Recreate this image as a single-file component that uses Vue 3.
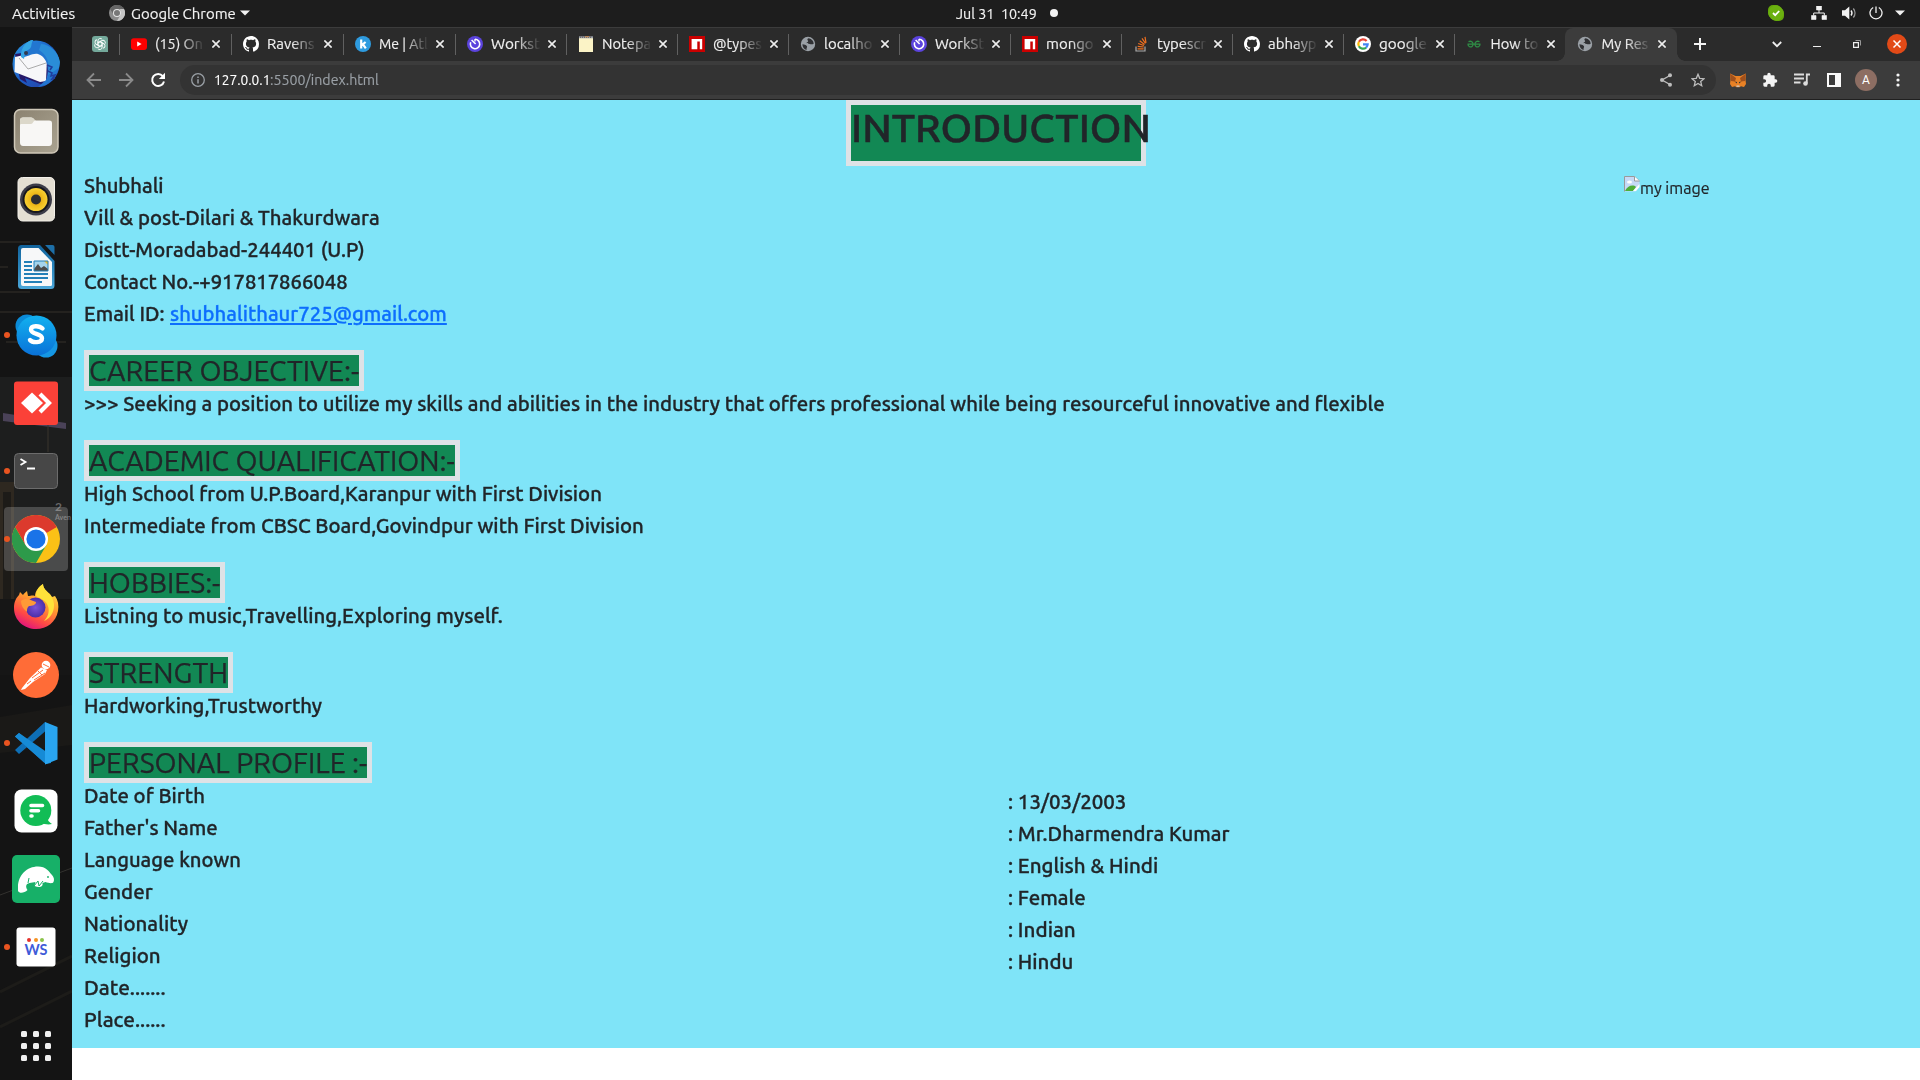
<script setup>
// Stretches or condenses a run of text to the given width in pixels.
const vFit = {
  mounted(el, { value }) {
    const natural = el.offsetWidth
    el.style.transform = `scaleX(${value / natural})`
    el.style.marginRight = `${value - natural}px`
  },
}

const clock = 'Jul 31\u00a0 10:49'

const tabs = [
  { icon: 'youtube', title: '(15) On', w: 48 },
  { icon: 'github', title: 'Ravens', w: 48 },
  { icon: 'keka', title: 'Me | Atl', w: 49 },
  { icon: 'clock', title: 'Workst', w: 49 },
  { icon: 'notepad', title: 'Notepa', w: 49 },
  { icon: 'npm', title: '@types', w: 49 },
  { icon: 'globe', title: 'localho', w: 49 },
  { icon: 'clock', title: 'WorkSt', w: 49 },
  { icon: 'npm', title: 'mongo', w: 48 },
  { icon: 'stack', title: 'typescr', w: 49 },
  { icon: 'github', title: 'abhayp', w: 49 },
  { icon: 'google', title: 'google', w: 48 },
  { icon: 'geeks', title: 'How to', w: 48 },
  { icon: 'globe', title: 'My Res', w: 47, active: true },
]

const dock = [
  { icon: 'thunderbird' },
  { icon: 'files' },
  { icon: 'rhythmbox' },
  { icon: 'writer' },
  { icon: 'skype', running: true },
  { icon: 'anydesk' },
  { icon: 'terminal', running: true },
  { icon: 'chrome', running: true, focused: true },
  { icon: 'firefox' },
  { icon: 'postman' },
  { icon: 'vscode', running: true },
  { icon: 'chat' },
  { icon: 'manatee' },
  { icon: 'workstatus', running: true, label: 'WS' },
]

const contact = [
  ['Shubhali', 80],
  ['Vill & post-Dilari & Thakurdwara', 296],
  ['Distt-Moradabad-244401 (U.P)', 281],
  ['Contact No.-+917817866048', 264],
]

const sections = [
  {
    heading: ['CAREER OBJECTIVE:-', 270],
    lines: [['>>> Seeking a position to utilize my skills and abilities in the industry that offers professional while being resourceful innovative and flexible', 1300.5]],
  },
  {
    heading: ['ACADEMIC QUALIFICATION:-', 366],
    lines: [
      ['High School from U.P.Board,Karanpur with First Division', 518],
      ['Intermediate from CBSC Board,Govindpur with First Division', 559.5],
    ],
  },
  { heading: ['HOBBIES:-', 131], lines: [['Listning to music,Travelling,Exploring myself.', 418.5]] },
  { heading: ['STRENGTH', 139], lines: [['Hardworking,Trustworthy', 238]] },
]

const labels = [
  ['Date of Birth', 121],
  ["Father's Name", 134],
  ['Language known', 157],
  ['Gender', 68.5],
  ['Nationality', 103.5],
  ['Religion', 77],
  ['Date.......', 82],
  ['Place......', 82],
]

const values = [
  [': 13/03/2003', 118],
  [': Mr.Dharmendra Kumar', 222],
  [': English & Hindi', 150],
  [': Female', 77.5],
  [': Indian', 68],
  [': Hindu', 65.5],
]
</script>

<template>
  <div class="desktop">
    <svg class="defs" width="0" height="0">
      <defs>
        <linearGradient id="gSkype" x1="0" y1="0" x2="0" y2="1"><stop offset="0" stop-color="#12b1f0" /><stop offset="1" stop-color="#0a72d8" /></linearGradient>
        <linearGradient id="gBird" x1="0" y1="0" x2="1" y2="1"><stop offset="0" stop-color="#2b9be6" /><stop offset=".5" stop-color="#1c5cc4" /><stop offset="1" stop-color="#2a3a9c" /></linearGradient>
        <linearGradient id="gFox" x1=".8" y1="0" x2=".3" y2="1"><stop offset="0" stop-color="#fff04a" /><stop offset=".4" stop-color="#ffa02f" /><stop offset=".75" stop-color="#ff4a45" /><stop offset="1" stop-color="#e0127f" /></linearGradient>
        <linearGradient id="gWriter" x1="0" y1="0" x2="0" y2="1"><stop offset="0" stop-color="#12639c" /><stop offset=".5" stop-color="#2a86bd" /><stop offset="1" stop-color="#4ba6d8" /></linearGradient>
        <linearGradient id="gFiles" x1="0" y1="0" x2="1" y2="1"><stop offset="0" stop-color="#8b8270" /><stop offset="1" stop-color="#aaa391" /></linearGradient>
        <radialGradient id="gSpk"><stop offset="0" stop-color="#c98a10" /><stop offset=".6" stop-color="#f0bc1c" /><stop offset="1" stop-color="#f7cf33" /></radialGradient>
        <radialGradient id="gGlobe"><stop offset="0" stop-color="#7a52d8" /><stop offset="1" stop-color="#4b2fa8" /></radialGradient>
      </defs>

      <symbol id="i-gpt" viewBox="0 0 16 16">
        <path d="M3 0h10a3 3 0 0 1 3 3v13H3a3 3 0 0 1-3-3V3a3 3 0 0 1 3-3z" fill="#74a99b" />
        <g fill="none" stroke="#fff" stroke-width=".9">
          <path v-for="a in 6" :key="a" :transform="`rotate(${a * 60} 8 8)`" d="M6 8.8V4.6a2.3 2.3 0 0 1 4.2-1.2M8 5.6l3.4 2" />
        </g>
      </symbol>
      <symbol id="i-youtube" viewBox="0 0 16 16"><rect y="2.3" width="16" height="11.6" rx="2.8" fill="#f00" /><path d="M6.2 5.6v5l4.4-2.5z" fill="#fff" /></symbol>
      <symbol id="i-github" viewBox="0 0 16 16"><path fill="#fff" d="M8 0C3.58 0 0 3.58 0 8c0 3.54 2.29 6.53 5.47 7.59.4.07.55-.17.55-.38 0-.19-.01-.82-.01-1.49-2.01.37-2.53-.49-2.69-.94-.09-.23-.48-.94-.82-1.13-.28-.15-.68-.52-.01-.53.63-.01 1.08.58 1.23.82.72 1.21 1.87.87 2.33.66.07-.52.28-.87.51-1.07-1.78-.2-3.64-.89-3.64-3.95 0-.87.31-1.59.82-2.15-.08-.2-.36-1.02.08-2.12 0 0 .67-.21 2.2.82.64-.18 1.32-.27 2-.27s1.36.09 2 .27c1.53-1.04 2.2-.82 2.2-.82.44 1.1.16 1.92.08 2.12.51.56.82 1.27.82 2.15 0 3.07-1.87 3.75-3.65 3.95.29.25.54.73.54 1.48 0 1.07-.01 1.93-.01 2.2 0 .21.15.46.55.38A8.01 8.01 0 0 0 16 8c0-4.42-3.58-8-8-8z" /></symbol>
      <symbol id="i-keka" viewBox="0 0 16 16"><circle cx="8" cy="8" r="8" fill="#2e9bdf" /><path d="M6.2 3.5v9M10.6 6 6.8 9.2M8 8.3l2.8 4" stroke="#fff" stroke-width="2.2" fill="none" /></symbol>
      <symbol id="i-clock" viewBox="0 0 16 16"><circle cx="8" cy="8" r="8" fill="#5b43dd" /><path d="M8 3.3a4.7 4.7 0 1 1-4.3 2.9" fill="none" stroke="#fff" stroke-width="1.6" /><path d="M4.6 4 8.6 8" stroke="#fff" stroke-width="1.6" /><path d="M8 3v2.5" stroke="#fff" stroke-width="1.4" /></symbol>
      <symbol id="i-notepad" viewBox="0 0 16 16"><path d="M1 1.5h14V16H1z" fill="#fbf3c6" /><path d="M1 .3h14v2H1z" fill="#9aa0a8" /><path d="M2 1.2h12" stroke="#5b4a4a" stroke-width="1" stroke-dasharray="1 1" /><path d="M7 .2h4v1H7z" fill="#c88a50" /></symbol>
      <symbol id="i-npm" viewBox="0 0 16 16"><path d="M0 0h16v16H0z" fill="#cb0000" /><path d="M2.6 3h10.6v10.2h-2.4V5.4H8.3v7.8H2.6z" fill="#fff" /></symbol>
      <symbol id="i-globe" viewBox="0 0 16 16"><circle cx="8" cy="8" r="7.2" fill="#9aa0a6" /><path d="M2.4 8.2c2 .2 3.4.5 4.6 2 .5 1-.8 1.8-.4 3.8-2.5-.6-4.2-3-4.2-5.8zM8.8 2.3c-1.5.3-1.8 1.3-1 2.2 1 .7-.3 1.9-1.3 2.2.5 1.3 2 .5 3.2 1.3 1.5.5 2.8.4 4-.3-.1-2.5-2-4.9-4.9-5.4z" fill="#303134" /></symbol>
      <symbol id="i-stack" viewBox="0 0 16 16"><path d="M3 10.5v4.5h9v-4.5" fill="none" stroke="#aaa" stroke-width="1.2" /><path d="M4.6 12.8h6M4.7 10.3l6 .7M5.2 7.5l5.7 2M6.7 4.7l4.8 3.7M9 2.4l3.5 5M12 .8l1 6" stroke="#f1701f" stroke-width="1.2" /></symbol>
      <symbol id="i-google" viewBox="0 0 16 16"><circle cx="8" cy="8" r="8" fill="#fff" /><g fill="none" stroke-width="2.2"><path d="M11.6 5A4.7 4.7 0 0 0 3.9 5.8" stroke="#ea4335" /><path d="M3.9 5.8a4.7 4.7 0 0 0 0 4.4" stroke="#fbbc05" /><path d="M3.9 10.2a4.7 4.7 0 0 0 7.2 1.4" stroke="#34a853" /><path d="M11.1 11.6A4.7 4.7 0 0 0 12.7 8.3H8" stroke="#4285f4" /></g></symbol>
      <symbol id="i-geeks" viewBox="0 0 16 16"><path d="M1.5 8.2h13M2.5 5.6c3-1 4.5.5 4.5 2.6s-1.5 3-3.2 2.6-1.8-1.6-1.8-2.6M13.5 5.6c-3-1-4.5.5-4.5 2.6s1.5 3 3.2 2.6 1.8-1.6 1.8-2.6" fill="none" stroke="#2f8d46" stroke-width="1.3" /></symbol>

      <symbol id="i-thunderbird" viewBox="0 0 48 48">
        <circle cx="24" cy="25" r="23.5" fill="url(#gBird)" />
        <path d="M3 15 8 40l7 4-2-5 18 7 12-10 2-20-14-5z" fill="#26196a" />
        <path d="M3 18 30 12l5 8-1 22-6 1L2.5 33z" fill="#f7f7f9" />
        <path d="m7 19 9 11 18-6" fill="none" stroke="#aaa" stroke-width="1" />
        <path d="M9 18C9 8 16 1 21 1l1 3c10-2 22 5 25 16 2 11-4 21-13 26l-8 2 8-7c4-12 1-23-8-26-7-1-11 4-17 3z" fill="#2276d0" />
        <path d="M9 18C8 8 16 1 21 1c-3 6 0 7-5 10-4 2-3 6-4 9z" fill="#34a5e3" />
        <path d="M27 11c8 5 11 12 9 25l11-7 1-6C46 12 38 6 29 5z" fill="#2a8dd8" />
        <path d="m36 32 4 2-1 3 4-1-3 4 3-1M35 26l5 2-2 3" fill="none" stroke="#203d9d" stroke-width="1.5" />
        <circle cx="14" cy="14" r="2" fill="#323a50" />
      </symbol>
      <symbol id="i-files" viewBox="0 0 48 48"><rect x="2.5" y="2.5" width="43.5" height="43.5" rx="6" fill="url(#gFiles)" stroke="#cfc8b8" stroke-width="1.5" /><path d="M8 14c0-3 1-3.5 3-3.5h8c3 0 3 3 5 3h13c2.5 0 3 1 3 3v19c0 2-1 3.5-3 3.5H11c-2 0-3-1.5-3-3.5z" fill="#f8f7f5" /><path d="M8 18v-4c0-3 1-3.5 3-3.5h8c3 0 3 3 5 3-3 0-3 3.5-5 3.5H10c-1 0-2 0-2 1z" fill="#dcd8ca" /></symbol>
      <symbol id="i-rhythmbox" viewBox="0 0 48 48"><rect x="6" y="2.5" width="36.5" height="43.5" rx="4.5" fill="#e4dfd3" stroke="#f3f0e9" stroke-width="1" /><circle cx="24" cy="24.5" r="16" fill="#3c3c48" /><circle cx="24" cy="24.5" r="13.5" fill="#17171d" /><circle cx="24" cy="24.5" r="11.5" fill="url(#gSpk)" /><circle cx="24" cy="24.5" r="5" fill="#2d2d31" /></symbol>
      <symbol id="i-writer" viewBox="0 0 48 48">
        <path d="M9.5 2H28l14.5 16v24.5a3.5 3.5 0 0 1-3.5 3.5H9.5A3.5 3.5 0 0 1 6 42.5v-37A3.5 3.5 0 0 1 9.5 2z" fill="url(#gWriter)" /><path d="M33 2h7.5a2 2 0 0 1 2 2v8z" fill="#1d6fa8" />
        <path d="M11 5h15.5L40 19v22.5a1.5 1.5 0 0 1-1.5 1.5H11a2 2 0 0 1-2-2V7a2 2 0 0 1 2-2z" fill="#f7f8f9" />
        <path d="M12 19h8M12 23h8M12 27h8M12 31h24M12 35h24M12 39h18" stroke="#2380b8" stroke-width="2" />
        <path d="M22 18h14v10H22z" fill="#a5d4ec" /><path d="m22 28 0-2 4-5 3 4 3-2 4 3v2z" fill="#4c4c4c" /><path d="M32 18h4v4z" fill="#f2bd2c" /><path d="M22 18h14v10H22z" fill="none" stroke="#2380b8" />
      </symbol>
      <symbol id="i-skype" viewBox="0 0 48 48"><circle cx="15" cy="15" r="11.5" fill="#0b8bd8" /><circle cx="34" cy="35" r="11.5" fill="#1597e4" /><circle cx="24.5" cy="24.5" r="20" fill="url(#gSkype)" /><path d="M30.5 17.5c-3-3-11.5-3.5-11.5 1.2s11 3.5 11 8.5S20.5 32 18 29" fill="none" stroke="#fff" stroke-width="4.4" stroke-linecap="round" /></symbol>
      <symbol id="i-anydesk" viewBox="0 0 48 48"><rect x="2" y="2.5" width="44" height="43.5" rx="3" fill="#fb4138" /><path d="m20 13.5 11 10.5-11 10.5L9 24z" fill="#fff" /><path d="m28 15 9 9-9 9" fill="none" stroke="#fff" stroke-width="4.2" /></symbol>
      <symbol id="i-terminal" viewBox="0 0 48 48"><rect x="2.5" y="6.5" width="43" height="35" rx="4" fill="#474747" stroke="#6c6c6c" /><path d="m8.5 12 5 3-5 3M15 21.5h8" fill="none" stroke="#fff" stroke-width="1.8" /></symbol>
      <symbol id="i-chrome" viewBox="0 0 48 48"><circle cx="24" cy="24" r="24" fill="#fbc116" /><path d="M24 24 3.2 12A24 24 0 0 1 44.8 12z" fill="#dc3a2d" /><path d="M3.2 12a24 24 0 0 0 20.8 36l10.4-18H13.6z" fill="#2d9a4a" /><path d="M3.2 12h41.6H24v12l-10.4 6z" fill="#dc3a2d" /><circle cx="24" cy="24" r="12" fill="#fff" /><circle cx="24" cy="24" r="9.6" fill="#1a73e8" /></symbol>
      <symbol id="i-firefox" viewBox="0 0 48 48">
        <path d="M2 25c0-6 2-10 5-13l1-3 3 3c1-2 3-3 4-4l1 5c3 0 4-1 7 0 0-5 4-9 8-12 0 5 4 7 7 10l2 3 3-1c3 4 4 9 3 15-2 11-11 18-22 18S2 38 2 25z" fill="url(#gFox)" />
        <path d="M31 1c0 5 5 8 8 12 6 8 3 21-7 25 5-5 6-12 3-17-2-4-8-6-11-8 0-5 3-10 7-12z" fill="#ffe23a" />
        <circle cx="23.5" cy="24.5" r="10" fill="url(#gGlobe)" /><path d="M9 18c5-4 9-1 15 1 0 3-4 4-7 4-2 2-2 3-2 6-4-3-6-7-6-11z" fill="#ff9a36" />
      </symbol>
      <symbol id="i-postman" viewBox="0 0 48 48"><circle cx="24" cy="24" r="23" fill="#ff6c37" /><circle cx="34" cy="14" r="4.3" fill="#fff" /><path d="M29 16.5 18 27l-8 10-1 2 4-1 8-7 12-8 2-4z" fill="#fff" /><path d="m31 13 6 3M20 27l11-8M22 29l11-7M26 20l4 4M15 33l4-3" stroke="#ff6c37" stroke-width="1" /></symbol>
      <symbol id="i-vscode" viewBox="0 0 48 48"><path d="M3 17.5 7 14l29 24-3.5 6z" fill="#1d85cf" /><path d="M3 31 7 35l30-26-4-6z" fill="#0e6fb6" /><path d="M3 17.5 7 14l32 22V44l-5 1z" fill="#168bd6" /><path d="m33 3 12.5 5v32.5L33 45.5z" fill="#29a5f0" /></symbol>
      <symbol id="i-chat" viewBox="0 0 48 48"><rect x="2.5" y="2.5" width="43" height="43" rx="7" fill="#fff" /><circle cx="23.8" cy="23.5" r="15.5" fill="#12bd56" /><path d="M36 28c-1 5 0 6 4 9-4 1-8 0-11-1z" fill="#12bd56" /><path d="M19 18.5h11.5M19 23.8h7.5M19 29h1" stroke="#fff" stroke-width="3.6" stroke-linecap="round" /></symbol>
      <symbol id="i-manatee" viewBox="0 0 48 48"><rect width="48" height="48" rx="5" fill="#17b068" /><path d="M6 32c0-12 9-20.5 20-20.5 8 0 11 5 14 8.5 2 2 2.5 5 1.5 7s-5 1-8 0l-3 1c1 4-3 5-8 3l1-4-6 1c-4 1-4 4-2 7-3 3-8 4-9.5 1z" fill="#fff" /><path d="m22 31 4-5 1 5 4-5M17 23l-1 5" stroke="#17b068" fill="none" /><circle cx="36" cy="22" r=".9" fill="#17b068" /></symbol>
      <symbol id="i-workstatus" viewBox="0 0 48 48"><rect x="4.5" y="4.5" width="39" height="39" rx="3" fill="#fff" /><circle cx="17" cy="17" r="2" fill="#e5322d" /><circle cx="24" cy="17" r="2" fill="#f59322" /><circle cx="30" cy="17" r="2" fill="#8bc34a" /></symbol>
    </svg>

    <header class="topbar">
      <div class="top-left">
        <span class="activities"><span v-fit="63" class="fit">Activities</span></span>
        <svg width="16" height="16" viewBox="0 0 16 16"><circle cx="8" cy="8" r="8" fill="#8c8c8c" /><path d="M8 0a8 8 0 0 1 7 4H8z" fill="#5c5c5c" /><path d="M1 4a8 8 0 0 1 7-4l7 4H8L5 10z" fill="#666" /><path d="M15 4a8 8 0 0 1-7 12l4-7-1-5z" fill="#c4c4c4" /><circle cx="8" cy="8" r="4" fill="#e6e6e6" /><circle cx="8" cy="8" r="3" fill="#777" /></svg>
        <span class="appname"><span v-fit="105" class="fit">Google Chrome</span></span>
        <svg width="10" height="6" viewBox="0 0 10 6"><path d="M0 .5h10L5 5.5z" fill="#f2f2f2" /></svg>
      </div>
      <div class="top-center"><span v-fit="81" class="fit">{{ clock }}</span><i class="notify"></i></div>
      <div class="top-right">
        <svg width="16" height="16" viewBox="0 0 16 16"><rect width="13" height="13" rx="5" fill="#64a70b" /><rect x="3" y="3" width="13" height="13" rx="5" fill="#64a70b" /><circle cx="8" cy="8" r="7.5" fill="#6bb010" /><path d="m5 8 2.2 2.2L11.2 6" fill="none" stroke="#fff" stroke-width="1.8" /></svg>
        <svg class="net" width="16" height="14" viewBox="0 0 16 14"><path d="M5.5 0h5v4h-5zM.5 9.5h4.5v4H.5zM11 9.5h4.5v4H11z" fill="#f2f2f2" stroke="#f2f2f2" stroke-width=".6" /><path d="M8 4v3M2.7 9.5V7h10.6v2.5" fill="none" stroke="#f2f2f2" /></svg>
        <svg width="16" height="14" viewBox="0 0 16 14"><path d="M1 4.3h3L8.3.5v13L4 9.7H1z" fill="#f2f2f2" /><path d="M10 4.5a4 4 0 0 1 0 5" fill="none" stroke="#f2f2f2" stroke-width="1.4" /><path d="M12.3 2.5a7 7 0 0 1 0 9" fill="none" stroke="#999" stroke-width="1.4" /></svg>
        <svg width="14" height="14" viewBox="0 0 14 14"><path d="M7 .5V7M4.2 1.5a6 6 0 1 0 5.6 0" fill="none" stroke="#f2f2f2" stroke-width="1.3" /></svg>
        <svg width="10" height="6" viewBox="0 0 10 6"><path d="M0 .5h10L5 5.5z" fill="#f2f2f2" /></svg>
      </div>
    </header>

    <div class="workspace">
      <nav class="dock">
        <svg class="wallpaper" width="72" height="1053" viewBox="0 0 72 1053">
          <rect width="72" height="1053" fill="#141414" />
          <path d="M0 215h30M0 240h8M0 265h30M0 285h72M6 315h60" stroke="#34302a" fill="none" />
          <path d="M0 350h72v260H0z" fill="#1d1e1e" />
          <path d="M3 386 66 396v6L3 394z" fill="#4a4258" /><path d="M0 455h14v125H0z" fill="#2e2820" /><path d="M3 465h8v115H3z" fill="#1d1b18" /><path d="M48 360v65" stroke="#3a352c" />
          <path d="M0 572h72v76H0z" fill="#161616" /><path d="m0 690 72-12v40L0 726z" fill="#1a1917" />
          <path d="m0 868 72-27" stroke="#33322f" /><path d="m0 1000 72-36M0 965l72-36" stroke="#1d1c19" stroke-width="3" />
          <g fill="#666" font-family="Lato, sans-serif" font-weight="700"><text x="55" y="484" font-size="12">2</text><text x="55" y="493" font-size="7">Aven</text></g>
        </svg>
        <div v-for="item in dock" :key="item.icon" class="dock-item" :class="{ focused: item.focused }">
          <i v-if="item.running" class="running"></i>
          <svg class="app" width="48" height="48"><use :href="`#i-${item.icon}`" /></svg>
          <b v-if="item.label" class="app-label">{{ item.label }}</b>
        </div>
        <div class="app-grid"><i v-for="n in 9" :key="n"></i></div>
      </nav>

      <main class="browser">
        <div class="tabstrip">
          <div class="tab pinned"><svg width="16" height="16"><use href="#i-gpt" /></svg></div>
          <div v-for="(tab, i) in tabs" :key="i" class="tab" :class="{ active: tab.active, wide: i < 3 }">
            <svg class="favicon" width="16" height="16"><use :href="`#i-${tab.icon}`" /></svg>
            <span class="title"><span v-fit="tab.w" class="fit">{{ tab.title }}</span></span>
            <svg class="close" width="8" height="8" viewBox="0 0 8 8"><path d="m.4.4 7.2 7.2M7.6.4.4 7.6" stroke="#eee" stroke-width="1.6" /></svg>
          </div>
          <svg class="plus" width="12" height="12" viewBox="0 0 12 12"><path d="M6 0v12M0 6h12" stroke="#f4f4f4" stroke-width="2" /></svg>
          <div class="window-controls">
            <svg width="10" height="7" viewBox="0 0 10 7"><path d="m.8 1 4.2 4.2L9.2 1" fill="none" stroke="#eee" stroke-width="1.8" /></svg>
            <svg width="8" height="8" viewBox="0 0 8 8"><path d="M0 6.5h8" stroke="#eee" /></svg>
            <svg width="8" height="8" viewBox="0 0 8 8"><path d="M.6 2.6h4.8v4.8H.6z" fill="none" stroke="#eee" stroke-width="1.2" /><path d="M2.5.5h5v5" fill="none" stroke="#999" /></svg>
            <svg width="20" height="20" viewBox="0 0 20 20"><circle cx="10" cy="10" r="10" fill="#e24a17" /><path d="m6.5 6.5 7 7M13.5 6.5l-7 7" stroke="#fff" stroke-width="1.5" /></svg>
          </div>
        </div>

        <div class="toolbar">
          <svg width="16" height="16" viewBox="0 0 16 16"><path d="M15 8H2M8 1.5 1.5 8 8 14.5" fill="none" stroke="#8a8a8a" stroke-width="1.8" /></svg>
          <svg width="16" height="16" viewBox="0 0 16 16"><path d="M1 8h13M8 1.5 14.5 8 8 14.5" fill="none" stroke="#8a8a8a" stroke-width="1.8" /></svg>
          <svg width="16" height="16" viewBox="0 0 16 16"><path d="M12.8 4.1A6 6 0 1 0 14 9.5" fill="none" stroke="#fff" stroke-width="2" /><path d="M15 .8V7H8.8z" fill="#fff" /></svg>
          <div class="omnibox">
            <svg width="14" height="14" viewBox="0 0 14 14"><circle cx="7" cy="7" r="6.3" fill="none" stroke="#9aa0a6" stroke-width="1.3" /><path d="M7 6.2v4.2M7 3.4v1.5" stroke="#9aa0a6" stroke-width="1.5" /></svg>
            <span class="url"><span v-fit="56" class="fit host">127.0.0.1</span><span v-fit="108.5" class="fit">:5500/index.html</span></span>
            <svg class="share" width="12" height="14" viewBox="0 0 12 14"><path d="M10 2.5 2 7l8 4.5" fill="none" stroke="#bdbdbd" stroke-width="1.4" /><g fill="#bdbdbd"><circle cx="10" cy="2.3" r="2" /><circle cx="2" cy="7" r="2" /><circle cx="10" cy="11.7" r="2" /></g></svg>
            <svg width="14" height="14" viewBox="0 0 14 14"><path d="m7 1.3 1.7 4 4.3.4-3.3 2.8 1 4.2L7 10.5l-3.7 2.2 1-4.2L1 5.7l4.3-.4z" fill="none" stroke="#bdbdbd" stroke-width="1.3" /></svg>
          </div>
          <div class="extensions">
            <svg width="16" height="16" viewBox="0 0 16 16"><path d="M0 1.5 5.5 4h5L16 1.5l-.5 6L16 12l-2 3-3-.7-1.5 1h-3l-1.5-1L2 15l-2-3 .5-4.5z" fill="#e88125" /><path d="M0 1.5 6 6 5 9.5 1 9zM16 1.5 10 6l1 3.5L15 9z" fill="#a0501c" /><path d="M4.5 9.5 7 10v1.5zM11.5 9.5 9 10v1.5z" fill="#333" /><path d="M6.5 13.5h3v1.3h-3z" fill="#ccc" /></svg>
            <svg width="16" height="16" viewBox="0 0 24 24"><path d="M20.5 11H19V7a2 2 0 0 0-2-2h-4V3.5a2.5 2.5 0 0 0-5 0V5H4a2 2 0 0 0-2 2v3.8h1.5a2.7 2.7 0 0 1 0 5.4H2V20a2 2 0 0 0 2 2h3.8v-1.5a2.7 2.7 0 0 1 5.4 0V22H17a2 2 0 0 0 2-2v-4h1.5a2.5 2.5 0 0 0 0-5z" fill="#f4f4f4" /></svg>
            <svg width="16" height="14" viewBox="0 0 16 14"><path d="M0 1.5h10M0 5.5h10M0 9.5h6.5M12.8 10V1.5H16" fill="none" stroke="#ddd" stroke-width="1.8" /><circle cx="11.5" cy="10.5" r="2.3" fill="#ddd" /></svg>
            <svg width="14" height="14" viewBox="0 0 14 14"><path d="M0 0h14v14H0zM2 2v10h6V2z" fill="#fafafa" fill-rule="evenodd" /></svg>
            <span class="avatar">A</span>
            <svg width="4" height="14" viewBox="0 0 4 14"><g fill="#f4f4f4"><circle cx="2" cy="2" r="1.6" /><circle cx="2" cy="7" r="1.6" /><circle cx="2" cy="12" r="1.6" /></g></svg>
          </div>
        </div>

        <article class="page">
          <h1 class="intro"><span v-fit="300" class="fit">INTRODUCTION</span></h1>
          <div class="about">
            <div class="lines">
              <div v-for="[text, w] in contact" :key="text" class="line"><span v-fit="w" class="fit">{{ text }}</span></div>
              <div class="line mail"><span v-fit="81" class="fit">Email ID:</span><a class="link" href="#"><span v-fit="277" class="fit">shubhalithaur725@gmail.com</span></a></div>
            </div>
            <div class="photo">
              <svg width="16" height="16" viewBox="0 0 16 16"><path d="M.5.5h10l5 4V10l-4 5.5H.5z" fill="#c6d9f7" /><path d="M.5 15.5V.5h10l5 4.5" fill="none" stroke="#9a9a9a" /><path d="M10.5.5V5h5" fill="#fff" stroke="#9a9a9a" /><ellipse cx="5.5" cy="6" rx="2.5" ry="1.5" fill="#fff" /><path d="M1 15c2-5 8-7 11-4l-3 4z" fill="#4fae38" /><path d="m9 15 6.5-7v3L12 15z" fill="#fff" /></svg>
              <span v-fit="69.5" class="fit">my image</span>
            </div>
          </div>
          <section v-for="s in sections" :key="s.heading[0]">
            <h2 class="heading"><span v-fit="s.heading[1]" class="fit">{{ s.heading[0] }}</span></h2>
            <div v-for="[text, w] in s.lines" :key="text" class="line"><span v-fit="w" class="fit">{{ text }}</span></div>
          </section>
          <section>
            <h2 class="heading"><span v-fit="278" class="fit">PERSONAL PROFILE :-</span></h2>
            <div class="profile">
              <div class="col">
                <div v-for="[text, w] in labels" :key="text" class="line"><span v-fit="w" class="fit">{{ text }}</span></div>
              </div>
              <div class="values">
                <div v-for="[text, w] in values" :key="text" class="line"><span v-fit="w" class="fit">{{ text }}</span></div>
              </div>
            </div>
          </section>
        </article>
      </main>
    </div>
  </div>
</template>

<style>
body { background: #fff; overflow: hidden; }
</style>

<style scoped>
* { box-sizing: border-box; }
.desktop { width: 1920px; height: 1080px; display: flex; flex-direction: column; font-family: Ubuntu, "Noto Sans", sans-serif; overflow: hidden; }
.defs { position: absolute; }
svg { display: block; flex: none; }
.fit { display: inline-block; white-space: nowrap; transform-origin: 0 50%; }

.topbar { height: 27px; flex: none; background: #1d1d1d; color: #f2f2f2; font-size: 14.67px; line-height: 27px; display: grid; grid-template-columns: 956px 1fr auto; -webkit-text-stroke: .15px currentColor; }
.top-left, .top-center, .top-right { display: flex; align-items: center; height: 26px; }
.top-left { padding-left: 12px; }
.activities { width: 97px; }
.appname { margin: 0 4px 0 6px; }
.notify { width: 8px; height: 8px; border-radius: 50%; background: #f2f2f2; margin-left: 13px; }
.top-right { padding-right: 15px; gap: 12px; }
.net { margin: 0 2px 0 15px; }

.workspace { display: flex; height: 1053px; }
.dock { position: relative; width: 72px; display: flex; flex-direction: column; align-items: center; padding-top: 2px; background: #141414; }
.wallpaper { position: absolute; inset: 0; }
.dock-item { position: relative; width: 64px; height: 64px; margin: 2px 0; display: flex; align-items: center; justify-content: center; border-radius: 4px; flex: none; }
.focused { background: rgba(255, 255, 255, .2); }
.app { position: relative; }
.app-label { position: absolute; left: 20px; top: 26px; width: 24px; font: 700 14.5px/18px Lato, sans-serif; text-align: center; color: #3f5bd8; }
.running { position: absolute; left: 0; top: 29px; width: 6px; height: 6px; border-radius: 50%; background: #e95420; }
.app-grid { position: relative; margin: auto 0 19px; display: grid; grid-template-columns: repeat(3, 6px); gap: 6px; }
.app-grid i { width: 6px; height: 6px; border-radius: 1.5px; background: #f0f0f0; }

.browser { width: 1848px; display: flex; flex-direction: column; background: #fff; }
.tabstrip { height: 34px; flex: none; background: #2b2b2b; border-top: 1px solid #3c3c3c; display: flex; align-items: center; color: #f0f0f0; }
.tab { width: 111.05px; height: 33px; flex: none; display: flex; align-items: center; padding: 0 0 1px 12px; position: relative; }
.tab.wide { width: 112px; }
.tab:not(.active)::before { content: ""; position: absolute; left: 0; top: 6px; width: 1px; height: 21px; background: #606060; }
.tab.pinned { width: 47px; padding-left: 20px; }
.tab.pinned::before { display: none; }
.tab.active { background: #3c3c3c; border-radius: 8px 8px 0 0; width: 112px; padding-left: 12px; }
.tab.active::before, .tab.active::after { content: ""; position: absolute; bottom: 0; width: 8px; height: 8px; }
.tab.active::before { left: -8px; background: radial-gradient(circle at 0 0, transparent 7.5px, #3c3c3c 8px); }
.tab.active::after { right: -8px; background: radial-gradient(circle at 100% 0, transparent 7.5px, #3c3c3c 8px); }
.title { margin-left: 8px; width: 49px; height: 24px; line-height: 24px; font-size: 14.67px; overflow: hidden; -webkit-text-stroke: .15px currentColor; -webkit-mask-image: linear-gradient(90deg, #000 50%, transparent 102%); mask-image: linear-gradient(90deg, #000 50%, transparent 102%); }
.close { margin-left: 8px; }
.plus { margin: 0 0 1px 16.5px; }
.window-controls { margin: 0 0 1px auto; padding-right: 3px; display: grid; grid-template-columns: repeat(4, 40px); justify-items: center; align-items: center; }

.toolbar { height: 39px; flex: none; background: #3c3c3c; border-bottom: 1px solid #202020; display: flex; align-items: center; padding-left: 14px; gap: 16px; }
.omnibox { width: 1536px; height: 30px; margin-left: -2px; background: #333; border-radius: 15px; display: flex; align-items: center; padding: 0 11px; }
.url { margin-left: 9px; flex: 1; font-size: 14.67px; line-height: 28px; color: #9aa0a6; -webkit-text-stroke: .15px currentColor; }
.host { color: #fff; }
.share { margin-right: 19px; }
.extensions { display: grid; grid-template-columns: repeat(6, 32px); justify-items: center; align-items: center; margin-left: -10px; }
.avatar { width: 22px; height: 22px; border-radius: 50%; background: #8d6e63; color: #fff; font: 12px/22px Roboto, sans-serif; text-align: center; }

.page { height: 948px; background: #7fe4f8; color: #212529; padding: 0 12px; font-size: 20px; font-weight: 500; }
.intro { width: 300px; height: 66px; margin: 0 auto 4px 762px; border: 5px solid #dee2e6; background: #128854; font-size: 40px; line-height: 46px; font-weight: 500; white-space: nowrap; -webkit-text-stroke: .55px currentColor; }
.about { display: flex; justify-content: space-between; }
.line { height: 32px; line-height: 32px; white-space: nowrap; -webkit-text-stroke: .32px currentColor; }
.mail { display: flex; gap: 5px; }
.link { color: #0d6efd; text-decoration: none; }
.link .fit { text-decoration: underline; text-underline-offset: 2px; text-decoration-thickness: 1.5px; }
.photo { display: flex; width: 284px; height: 24px; margin-top: 6px; font-size: 16px; line-height: 24px; font-weight: 400; -webkit-text-stroke: .2px currentColor; }
section { margin-top: 20px; }
.heading { width: fit-content; height: 41px; margin: 0 0 -3px; border: 5px solid #dee2e6; background: #128854; font-size: 28px; line-height: 31px; font-weight: 400; -webkit-text-stroke: .25px currentColor; }
.profile { display: flex; }
.col { width: 923.5px; flex: none; }
.values { padding-top: 6px; }
</style>
